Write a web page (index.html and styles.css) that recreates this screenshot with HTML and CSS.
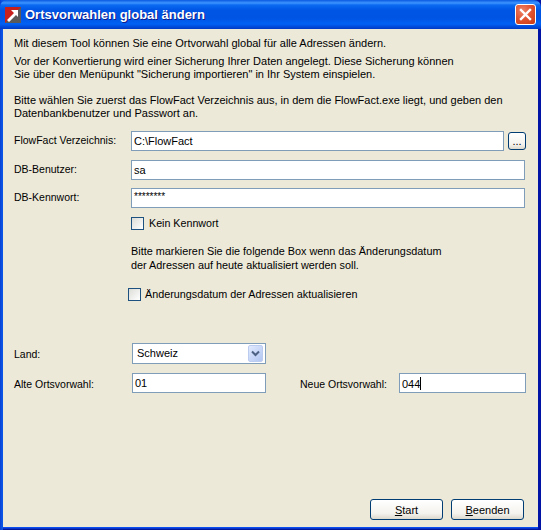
FILE: index.html
```html
<!DOCTYPE html>
<html lang="de">
<head>
<meta charset="utf-8">
<title>Ortsvorwahlen global ändern</title>
<link rel="stylesheet" href="styles.css">
</head>
<body>
<div class="window">
  <header class="titlebar">
    <svg class="app-icon" width="16" height="16" viewBox="0 0 16 16">
      <rect width="16" height="16" fill="#5a5a5a"/>
      <path d="M0 0H16L0 16Z" fill="#c8201c"/>
      <path d="M2 13 L9 6 L6 3 H13 V10 L11 8 L4 15Z" fill="#fff"/>
    </svg>
    <span class="title">Ortsvorwahlen global ändern</span>
    <div class="close">
      <svg width="21" height="21" viewBox="0 0 21 21">
        <path d="M6 6 L15 15 M15 6 L6 15" stroke="#fff" stroke-width="2.4" stroke-linecap="square" fill="none"/>
      </svg>
    </div>
  </header>
  <main class="content">
    <p class="intro first">Mit diesem Tool können Sie eine Ortvorwahl global für alle Adressen ändern.</p>
    <p class="intro second">Vor der Konvertierung wird einer Sicherung Ihrer Daten angelegt. Diese Sicherung können<br>Sie über den Menüpunkt "Sicherung importieren" in Ihr System einspielen.</p>
    <p class="intro third">Bitte wählen Sie zuerst das FlowFact Verzeichnis aus, in dem die FlowFact.exe liegt, und geben den<br>Datenbankbenutzer und Passwort an.</p>

    <div class="row row-dir">
      <label class="label">FlowFact Verzeichnis:</label>
      <div class="field grow">C:\FlowFact</div>
      <button class="btn browse" type="button">...</button>
    </div>
    <div class="row row-user">
      <label class="label">DB-Benutzer:</label>
      <div class="field grow">sa</div>
    </div>
    <div class="row row-pass">
      <label class="label">DB-Kennwort:</label>
      <div class="field grow pass">********</div>
    </div>
    <div class="check check-a"><span class="box"></span><span>Kein Kennwort</span></div>
    <p class="note">Bitte markieren Sie die folgende Box wenn das Änderungsdatum<br>der Adressen auf heute aktualisiert werden soll.</p>
    <div class="check check-b"><span class="box"></span><span>Änderungsdatum der Adressen aktualisieren</span></div>

    <div class="row row-land">
      <label class="label short">Land:</label>
      <div class="field combo">
        <span>Schweiz</span>
        <span class="arrow">
          <svg width="9" height="7" viewBox="0 0 9 7"><path d="M1 1.5 L4.5 5 L8 1.5" fill="none" stroke="#4d6185" stroke-width="2"/></svg>
        </span>
      </div>
    </div>
    <div class="row row-code">
      <label class="label short">Alte Ortsvorwahl:</label>
      <div class="field code">01</div>
      <label class="label new">Neue Ortsvorwahl:</label>
      <div class="field code-new">044<span class="caret"></span></div>
    </div>
    <div class="actions">
      <button class="btn action" type="button"><span><u>S</u>tart</span></button>
      <button class="btn action" type="button"><span><u>B</u>eenden</span></button>
    </div>
  </main>
</div>
</body>
</html>
```
FILE: styles.css
```css
* { box-sizing: border-box; }
html, body { margin: 0; padding: 0; }
body {
  width: 541px;
  height: 530px;
  overflow: hidden;
  font-family: "Liberation Sans", Arial, sans-serif;
  font-size: 11px;
  color: #000;
  background: #ece9d8;
}
.window {
  width: 541px;
  height: 530px;
  display: flex;
  flex-direction: column;
  background: linear-gradient(90deg, #0a3fd0 0, #0a55e5 2px, #0a55e5 50%, #0013a4 50%, #0013a4 100%);
}
.titlebar {
  height: 29px;
  flex: none;
  display: flex;
  align-items: center;
  padding: 0 5px;
  border-radius: 7px 7px 0 0;
  background: linear-gradient(180deg, #0a5ae0 0, #3d95ff 3px, #0a6af0 5px, #0055e5 10px, #0054e3 18px, #0061f4 24px, #0048d8 27px, #003bc4 29px);
}
.app-icon { flex: none; margin-right: 4px; }
.title {
  flex: 1;
  color: #fff;
  font-family: "Liberation Sans", Arial, sans-serif;
  font-weight: bold;
  font-size: 13px;
  text-shadow: 1px 1px 0 #0f1b8c;
}
.close {
  width: 21px;
  height: 21px;
  flex: none;
  border: 1px solid #fff;
  border-radius: 3px;
  background: radial-gradient(circle at 35% 30%, #ed8468 0, #e0512f 50%, #c93a12 100%);
  display: flex;
  align-items: center;
  justify-content: center;
}
.close svg { flex: none; margin: -1px; }
.content {
  flex: 1;
  min-height: 0;
  margin: 0 3px 3px;
  padding: 0 0 0 11px;
  background: #ece9d8;
  display: flex;
  flex-direction: column;
  line-height: 13px;
  box-shadow: 0 1px 0 #0a4ef0, 0 2px 0 #0a34c8, 0 3px 0 #00189c;
}
.intro { margin: 0; }
.first { margin-top: 8px; }
.second { margin-top: 5px; }
.third { margin-top: 13px; }
.row { display: flex; align-items: flex-start; }
.label { width: 117px; flex: none; font-size: 10.5px; }
.field {
  height: 20px;
  border: 1px solid #7f9db9;
  background: #fff;
  padding: 3px 0 0 2px;
}
.grow { width: 394px; }
.row-dir { margin-top: 11px; }
.row-dir .label { padding-top: 3px; }
.row-dir .grow { width: 373px; }
.row-user { margin-top: 9px; }
.row-user .label, .row-pass .label { padding-top: 3px; }
.row-pass { margin-top: 8px; }
.pass { padding-top: 1px; font-size: 10px; }
.btn {
  font: inherit;
  color: #000;
  background: linear-gradient(180deg, #fff 0, #f4f3ee 70%, #dcd8cd 100%);
  border: 1px solid #003c74;
  border-radius: 3px;
  padding: 0;
}
.browse {
  width: 18px;
  height: 18px;
  margin: 1px 0 0 4px;
  line-height: 14px;
}
.check { display: flex; align-items: center; height: 13px; gap: 4px; font-size: 10.8px; }
.check-a { margin: 9px 0 0 117px; gap: 5px; font-size: 10.7px; }
.check-b { margin: 16px 0 0 114px; }
.check-b span:last-child { margin-top: -1px; }
.box {
  width: 13px;
  height: 13px;
  flex: none;
  border: 1px solid #1c5180;
  background: linear-gradient(135deg, #dcdcd7 0, #ffffff 100%);
}
.note { margin: 14px 0 0 117px; line-height: 14px; font-size: 10.85px; }
.row-land { margin-top: 42px; }
.short { width: 118px; padding-top: 5px; }
.combo {
  width: 134px;
  height: 21px;
  padding: 3px 2px 0 4px;
  display: flex;
  justify-content: space-between;
  align-items: flex-start;
}
.arrow {
  width: 15px;
  height: 17px;
  margin-top: -2px;
  border-radius: 2px;
  border: 1px solid #bcccf0;
  background: linear-gradient(135deg, #e1eafe 0, #b2c6f2 100%);
  display: flex;
  align-items: center;
  justify-content: center;
}
.row-code { margin-top: 9px; }
.row-code .short { padding-top: 5px; }
.code { width: 134px; }
.new { width: 99px; margin-left: 34px; padding-top: 5px; }
.code-new { width: 127px; }
.caret {
  display: inline-block;
  width: 1px;
  height: 13px;
  background: #000;
  vertical-align: -2px;
}
.actions {
  margin-top: auto;
  margin-bottom: 7px;
  display: flex;
  gap: 8px;
  padding-left: 356px;
}
.action { width: 73px; height: 21px; padding-top: 1px; }
```
